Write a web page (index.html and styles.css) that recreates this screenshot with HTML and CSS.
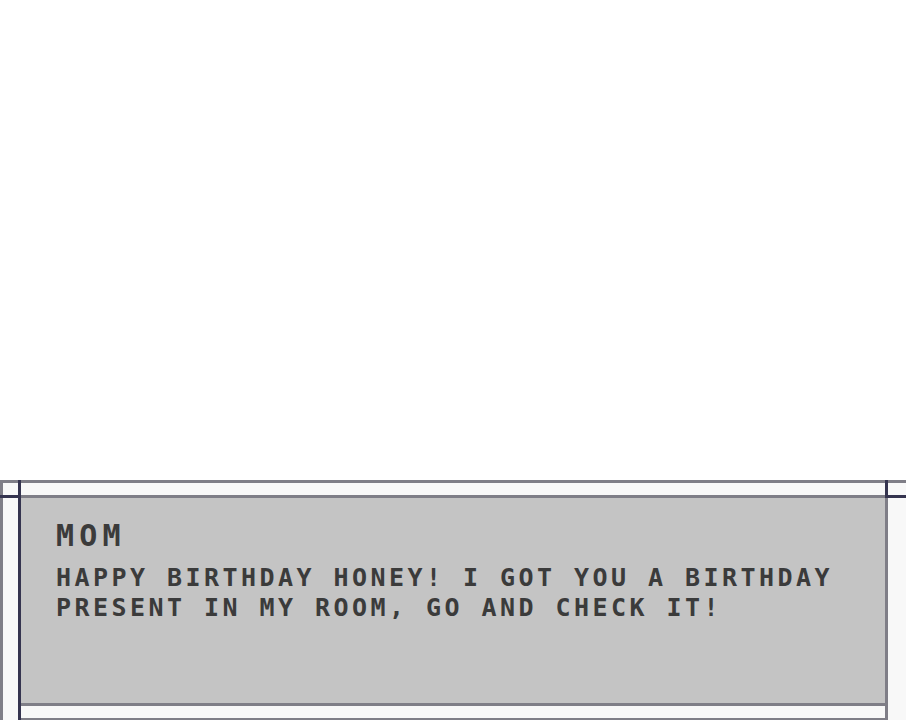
FILE: index.html
```html
<!DOCTYPE html>
<html lang="en">
<head>
<meta charset="utf-8">
<title>Dialogue</title>
<link rel="stylesheet" href="styles.css">
</head>
<body>
<div class="stage">
  <div class="sky"></div>
  <div class="frame">
    <div class="ln ln-top"></div>
    <div class="ln ln-left"></div>
    <div class="ln ln-dark-v-left"></div>
    <div class="ln ln-dark-h-left"></div>
    <div class="ln ln-mid-top"></div>
    <div class="ln ln-dark-v-right"></div>
    <div class="ln ln-dark-h-right"></div>
    <div class="ln ln-right"></div>
    <div class="ln ln-mid-bottom"></div>
    <div class="ln ln-mid-last"></div>
    <div class="dialog">
      <div class="speaker">MOM</div>
      <p class="line">HAPPY BIRTHDAY HONEY! I GOT YOU A BIRTHDAY PRESENT IN MY ROOM, GO AND CHECK IT!</p>
    </div>
  </div>
</div>
</body>
</html>
```
FILE: styles.css
```css
html, body {
  margin: 0;
  padding: 0;
  background: #ffffff;
  overflow: hidden;
}
.stage {
  height: 720px;
  overflow: hidden;
  display: flex;
  flex-direction: column;
}
.sky {
  flex: none;
  height: 480px;
}
.frame {
  flex: none;
  display: grid;
  grid-template-columns: 3px 15px 3px 864px 3px 18px;
  grid-template-rows: 3px 12px 3px 205px 3px 12px 3px;
  background: #f8f8f8;
}
.ln { background: #7f7e87; }
.ln-top { grid-column: 1 / -1; grid-row: 1; }
.ln-left { grid-column: 1; grid-row: 1 / -1; }
.ln-dark-v-left { grid-column: 3; grid-row: 1 / -1; background: #35344f; }
.ln-dark-h-left { grid-column: 1 / 3; grid-row: 3; background: #35344f; }
.ln-mid-top { grid-column: 4; grid-row: 3; }
.ln-dark-v-right { grid-column: 5; grid-row: 1 / 4; background: #35344f; }
.ln-dark-h-right { grid-column: 6; grid-row: 3; background: #35344f; }
.ln-right { grid-column: 5; grid-row: 4 / -1; }
.ln-mid-bottom { grid-column: 4; grid-row: 5; }
.ln-mid-last { grid-column: 4; grid-row: 7; }
.dialog {
  grid-column: 4;
  grid-row: 4;
  background: #c4c4c4;
  padding: 23px 20px 0 35px;
  color: #3b3b3b;
  font-family: "DejaVu Sans Mono", "Liberation Mono", monospace;
  font-weight: bold;
}
.speaker {
  font-size: 30px;
  line-height: 30px;
  letter-spacing: 5.2px;
}
.line {
  margin: 12px 0 0;
  font-size: 25px;
  line-height: 29.5px;
  letter-spacing: 3.45px;
}
```
